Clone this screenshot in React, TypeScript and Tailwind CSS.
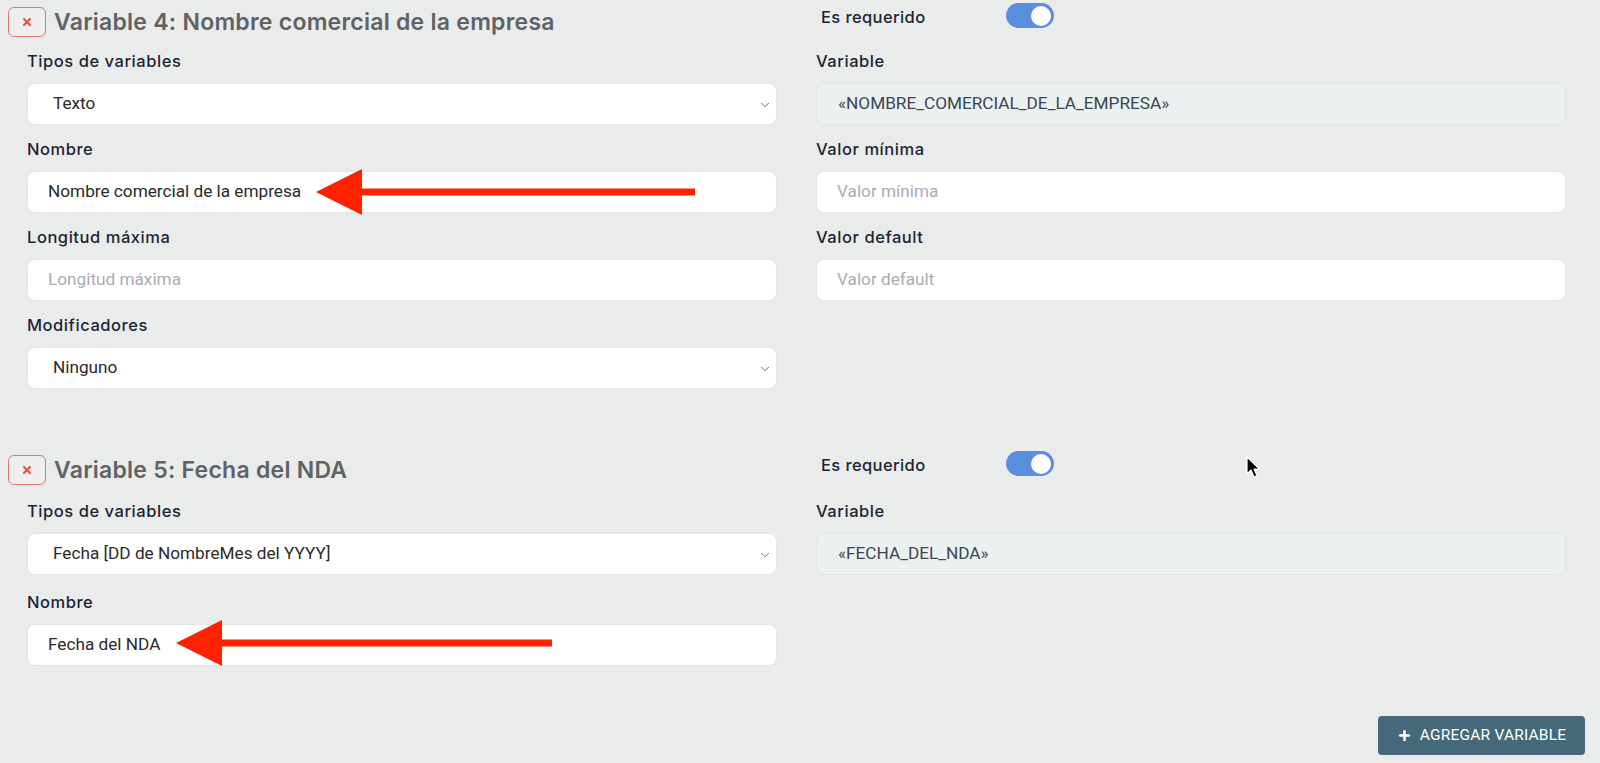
import { ChevronDown, X, Plus } from "lucide-react";

const labelFont = { fontFamily: "Inter, 'Noto Sans', sans-serif" };

function Label({ children }: { children: React.ReactNode }) {
  return (
    <div
      className="h-6 leading-6 text-[16.5px] font-medium text-[#1b2434] tracking-[0.55px] mb-[10px]"
      style={labelFont}
    >
      {children}
    </div>
  );
}

function Field({
  label,
  value,
  placeholder,
  select,
  readOnly,
  gap = "mb-[12px]",
}: {
  label: string;
  value?: string;
  placeholder?: string;
  select?: boolean;
  readOnly?: boolean;
  gap?: string;
}) {
  return (
    <div className={gap}>
      <Label>{label}</Label>
      <div
        className={
          "relative h-[42px] rounded-lg border flex items-center text-[17.2px] font-['Roboto',sans-serif] " +
          (readOnly
            ? "bg-[#ebf0f0] border-[#dfe5e6] text-[#3b4650] pl-[21px]"
            : "bg-white border-[#e3e6e8] text-[#2a2a2a] " +
              (select ? "pl-[25px]" : "pl-[20px]"))
        }
      >
        {value ? (
          <span>{value}</span>
        ) : (
          <span className="text-[#a9acb6]">{placeholder}</span>
        )}
        {select && (
          <ChevronDown
            size={14}
            strokeWidth={1.5}
            className="absolute right-[4px] top-[14px] text-[#555]"
          />
        )}
      </div>
    </div>
  );
}

function Toggle() {
  return (
    <div className="w-[48px] h-[25px] rounded-full bg-[#5a8fdf] flex items-center justify-end pr-[3px]">
      <div className="w-[20px] h-[20px] rounded-full bg-white" />
    </div>
  );
}

function Header({ title }: { title: string }) {
  return (
    <div className="grid grid-cols-2 gap-x-[39px] h-[30px]">
      <div className="flex items-center -ml-[19px]">
        <button className="w-[38px] h-[30px] rounded-md border border-[#e0766f] bg-[#eef0ef] flex items-center justify-center mr-[8px]">
          <X size={12} strokeWidth={4.5} className="text-[#e8554e]" />
        </button>
        <h2
          className="text-[23px] font-semibold text-[#606263] tracking-[0.25px] whitespace-nowrap"
          style={labelFont}
        >
          {title}
        </h2>
      </div>
      <div className="flex items-start pl-[5px] -mt-[2px]">
        <span
          className="text-[16.5px] font-medium text-[#1b2434] tracking-[0.4px] w-[185px] leading-[28px]"
          style={labelFont}
        >
          Es requerido
        </span>
        <Toggle />
      </div>
    </div>
  );
}

function Arrow({ x, y, len }: { x: number; y: number; len: number }) {
  return (
    <svg
      className="absolute pointer-events-none"
      style={{ left: x, top: y - 24 }}
      width={len + 2}
      height={48}
      viewBox={`0 0 ${len + 2} 48`}
    >
      <polygon points={`0,24 46,1 46,20.5 ${len},20.5 ${len},27.5 46,27.5 46,47`} fill="#fe2200" />
    </svg>
  );
}

export default function App() {
  return (
    <div className="relative min-h-screen h-[763px] overflow-hidden bg-[#eaeceb]">
      <div className="pl-[27px] pr-[34px] pt-[5px]">
        {/* Variable 4 */}
        <Header title="Variable 4: Nombre comercial de la empresa" />
        <div className="grid grid-cols-2 gap-x-[39px] mt-[14px]">
          <div>
            <Field label="Tipos de variables" value="Texto" select />
            <Field label="Nombre" value="Nombre comercial de la empresa" />
            <Field label="Longitud máxima" placeholder="Longitud máxima" />
            <Field label="Modificadores" value="Ninguno" select />
          </div>
          <div>
            <Field
              label="Variable"
              value="«NOMBRE_COMERCIAL_DE_LA_EMPRESA»"
              readOnly
            />
            <Field label="Valor mínima" placeholder="Valor mínima" />
            <Field label="Valor default" placeholder="Valor default" />
          </div>
        </div>

        {/* Variable 5 */}
        <div className="mt-[52px]">
          <Header title="Variable 5: Fecha del NDA" />
          <div className="grid grid-cols-2 gap-x-[39px] mt-[16px]">
            <div>
              <Field
                label="Tipos de variables"
                value="Fecha [DD de NombreMes del YYYY]"
                select
                gap="mb-[15px]"
              />
              <Field label="Nombre" value="Fecha del NDA" />
            </div>
            <div>
              <Field label="Variable" value="«FECHA_DEL_NDA»" readOnly />
            </div>
          </div>
        </div>

        <div className="flex justify-end -mr-[19px] mt-[38px]">
          <button className="h-[39px] w-[207px] rounded bg-[#45687b] text-white text-[15.5px] font-['Roboto',sans-serif] flex items-center justify-center gap-[8px] tracking-[0.2px]">
            <Plus size={15} strokeWidth={4} />
            AGREGAR VARIABLE
          </button>
        </div>
      </div>

      <Arrow x={316} y={192} len={379} />
      <Arrow x={176} y={643} len={376} />

      <svg
        className="absolute pointer-events-none"
        style={{ left: 1246, top: 456 }}
        width="16"
        height="24"
        viewBox="0 0 16 24"
      >
        <path
          d="M1 1 L1 18 L5 14 L8 21 L11 19.6 L8 13 L13.5 13 Z"
          fill="#000"
          stroke="#fff"
          strokeWidth="1.2"
          strokeLinejoin="round"
        />
      </svg>
    </div>
  );
}
